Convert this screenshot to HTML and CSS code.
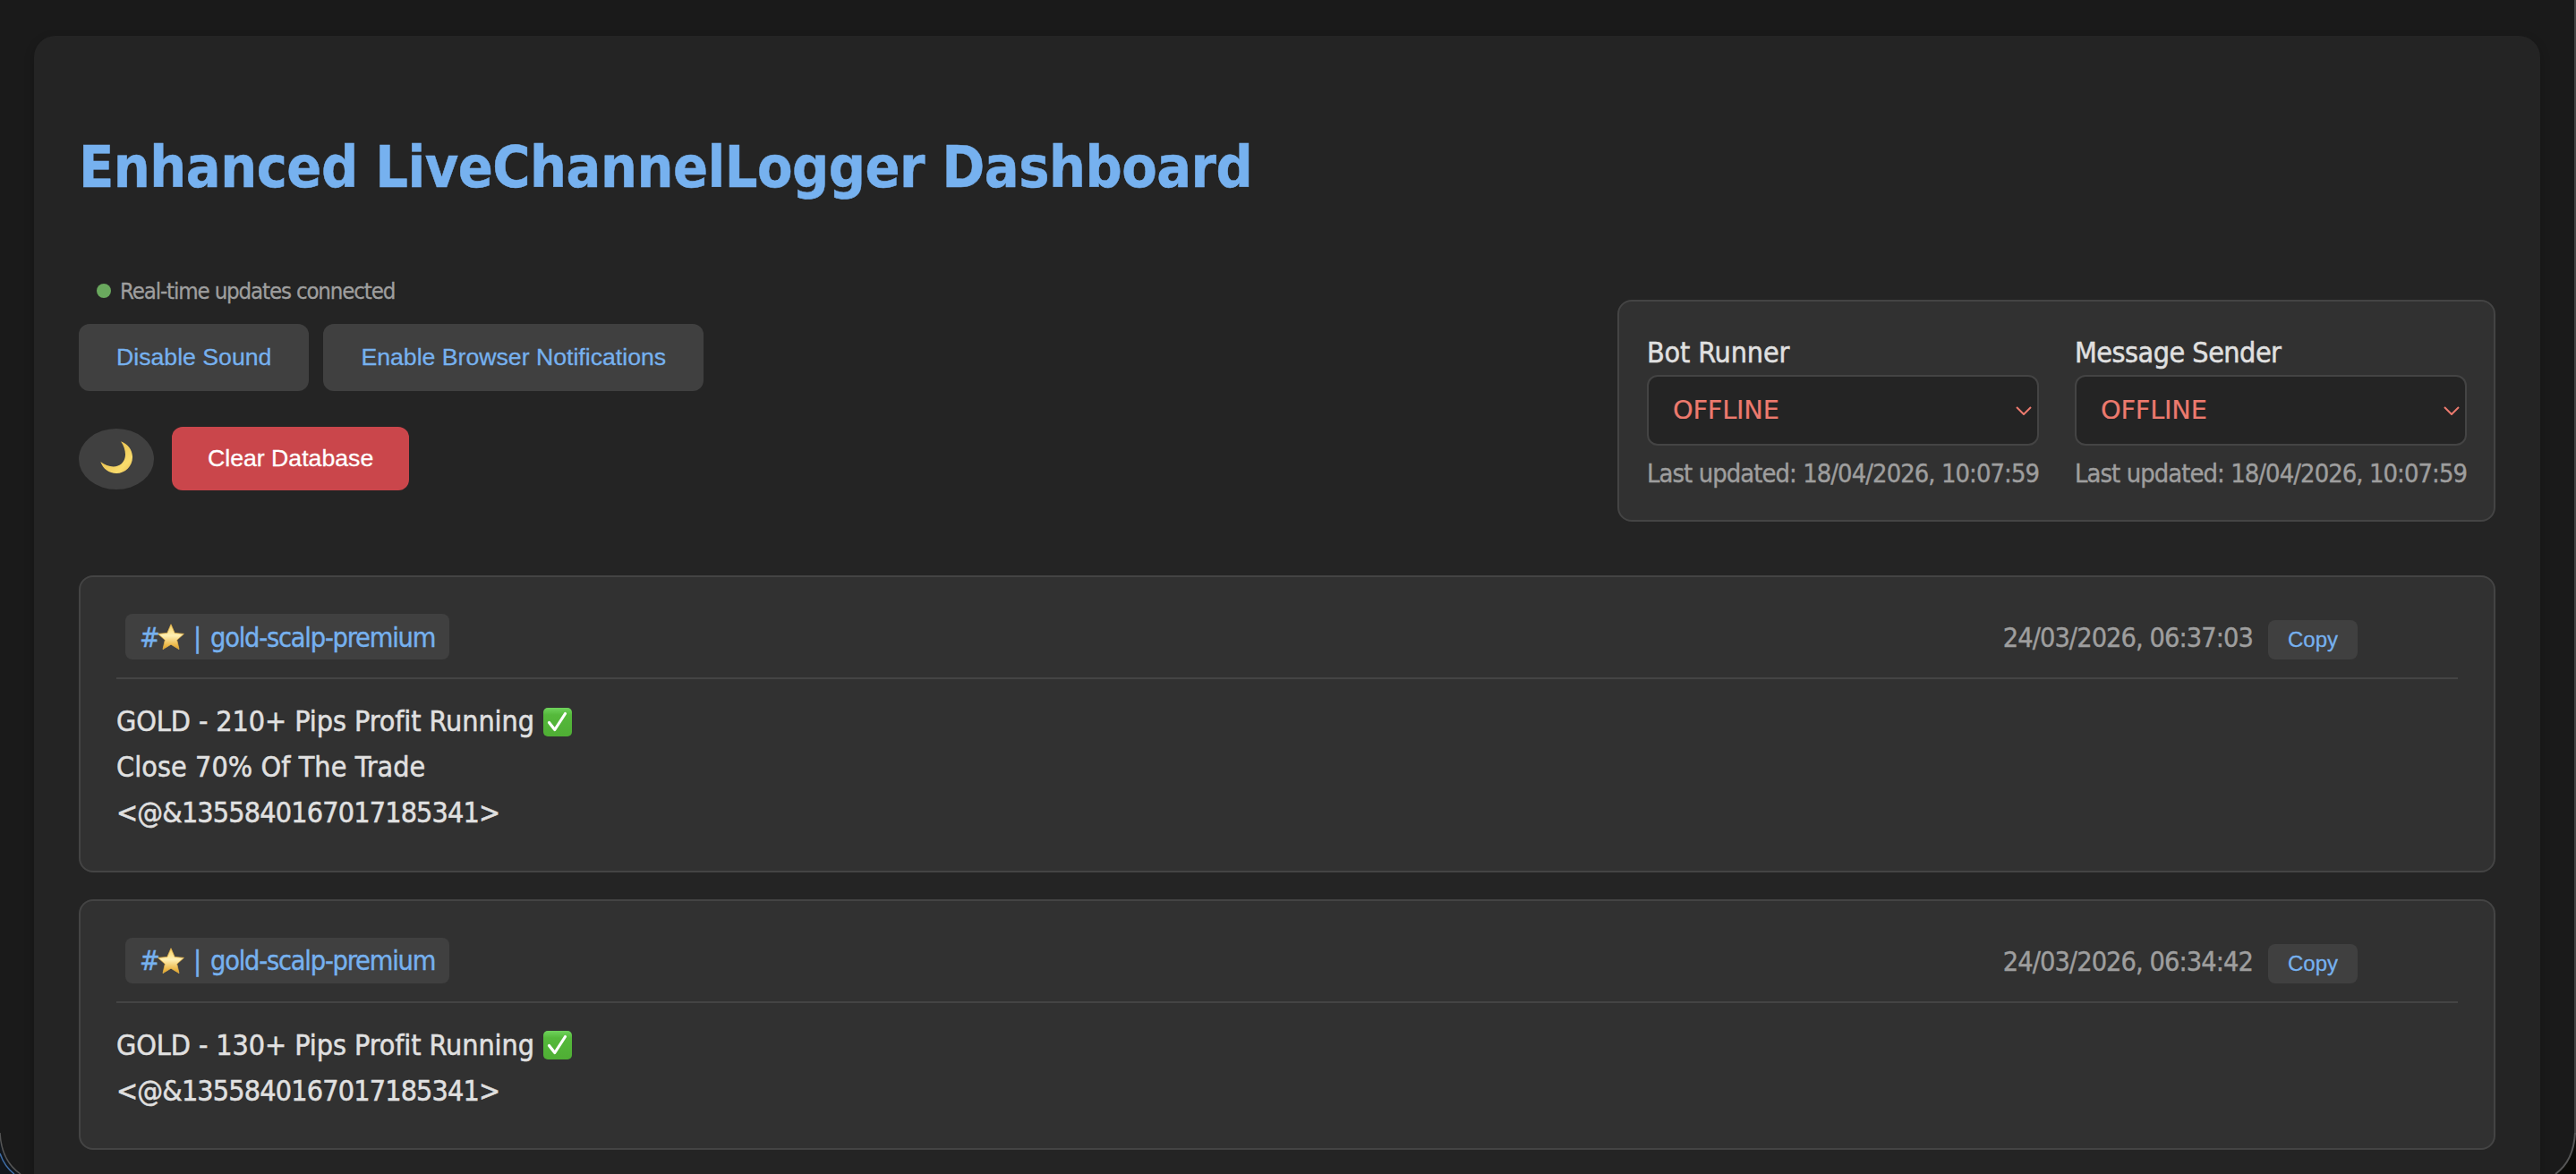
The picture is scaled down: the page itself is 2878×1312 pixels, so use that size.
FILE: index.html
```html
<!DOCTYPE html>
<html lang="en">
<head>
<meta charset="utf-8">
<title>Enhanced LiveChannelLogger Dashboard</title>
<link rel="stylesheet" href="styles.css">
</head>
<body>
<svg width="0" height="0" class="defs" aria-hidden="true">
  <defs>
    <linearGradient id="starFill" x1="0" y1="0" x2="0" y2="1"><stop offset="0" stop-color="#f6d060"/><stop offset=".45" stop-color="#fff0b4"/><stop offset="1" stop-color="#e3a01c"/></linearGradient>
    <linearGradient id="checkFill" x1="0" y1="0" x2="0" y2="1"><stop offset="0" stop-color="#6fd35c"/><stop offset=".25" stop-color="#55b93b"/><stop offset="1" stop-color="#4fae34"/></linearGradient>
    <linearGradient id="moonFill" x1="0" y1="0" x2="1" y2="1"><stop offset="0" stop-color="#e0b040"/><stop offset=".75" stop-color="#f9dc6c"/><stop offset="1" stop-color="#e6b850"/></linearGradient>
    <symbol id="star" viewBox="0 0 30 30"><path d="M15 .8 19.2 10.400 29.400 11.400 21.700 18.300 24 28.600 15 23.200 6 28.600 8.300 18.300 .6 11.400 10.800 10.400Z" fill="url(#starFill)" stroke="#e3b24a" stroke-width=".8" stroke-linejoin="round"/></symbol>
    <symbol id="check" viewBox="0 0 32 32"><rect width="32" height="32" rx="5" fill="url(#checkFill)"/><path d="M6.500 16.500 12.800 24.500 24.500 6.500" fill="none" stroke="#fff" stroke-width="3.2" stroke-linecap="round" stroke-linejoin="round"/></symbol>
  </defs>
</svg>
<main class="container">
  <h1 class="title">Enhanced LiveChannelLogger Dashboard</h1>
  <div class="top">
    <div class="controls">
      <div class="status"><i class="dot"></i><span>Real-time updates connected</span></div>
      <div class="row">
        <button class="btn">Disable Sound</button>
        <button class="btn">Enable Browser Notifications</button>
      </div>
      <div class="row second">
        <button class="moon" aria-label="Toggle theme"><svg width="36" height="36" viewBox="0 0 36 36"><path d="M23 .3C31 3 36 10 36 18 36 28 28 36 18 36 10 36 3 31 .3 23 8 29 18 30.500 24 25 30 19 29 9 23 .3Z" fill="url(#moonFill)"/></svg></button>
        <button class="btn danger">Clear Database</button>
      </div>
    </div>
    <section class="panel">
      <div class="runner">
        <div class="label">Bot Runner</div>
        <div class="select"><span>OFFLINE</span><svg width="18" height="10" viewBox="0 0 18 10"><path d="M1 1 9 9 17 1"/></svg></div>
        <div class="updated">Last updated: 18/04/2026, 10:07:59</div>
      </div>
      <div class="runner">
        <div class="label sender">Message Sender</div>
        <div class="select"><span>OFFLINE</span><svg width="18" height="10" viewBox="0 0 18 10"><path d="M1 1 9 9 17 1"/></svg></div>
        <div class="updated">Last updated: 18/04/2026, 10:07:59</div>
      </div>
    </section>
  </div>
  <div class="messages">
    <article class="card">
      <header class="head">
        <div class="tag"><span class="hash">#</span><svg class="star"><use href="#star"/></svg><span class="bar">|</span><span>gold-scalp-premium</span></div>
        <div class="meta"><span class="time">24/03/2026, 06:37:03</span><button class="copy">Copy</button></div>
      </header>
      <div class="body">
        <div class="line"><span>GOLD - 210+ Pips Profit Running</span><svg class="check"><use href="#check"/></svg></div>
        <div class="line close"><span>Close 70% Of The Trade</span></div>
        <div class="line mention"><span>&lt;@&amp;1355840167017185341&gt;</span></div>
      </div>
    </article>
    <article class="card">
      <header class="head">
        <div class="tag"><span class="hash">#</span><svg class="star"><use href="#star"/></svg><span class="bar">|</span><span>gold-scalp-premium</span></div>
        <div class="meta"><span class="time">24/03/2026, 06:34:42</span><button class="copy">Copy</button></div>
      </header>
      <div class="body">
        <div class="line"><span>GOLD - 130+ Pips Profit Running</span><svg class="check"><use href="#check"/></svg></div>
        <div class="line mention"><span>&lt;@&amp;1355840167017185341&gt;</span></div>
      </div>
    </article>
  </div>
</main>
<div class="window-edge"></div>
<svg class="corner left" width="24" height="46" viewBox="0 0 24 46"><path d="M0 0C1 19 8 36 23 46H0Z" fill="#11161c"/><path d="M0 0C1 19 8 36 23 46" fill="none" stroke="#555" stroke-width="1.500"/><path d="M0 23C3 32 8 40 16 46" fill="none" stroke="#3f6ea8" stroke-width="1.500"/></svg>
<svg class="corner right" width="24" height="46" viewBox="0 0 24 46"><path d="M24 0C23 19 16 36 1 46H24Z" fill="#0b0b08"/><path d="M23 0C22 19 15 36 1 46" fill="none" stroke="#555" stroke-width="2"/></svg>
</body>
</html>
```
FILE: styles.css
```css
* { box-sizing: border-box; }
html, body { height: 100%; }
body {
  margin: 0;
  padding: 40px 40px 0 38px;
  overflow: hidden;
  background: #1a1a1a;
  color: #e0e0e0;
  font: 32px/51px "DejaVu Sans Condensed", "DejaVu Sans", sans-serif;
}
.defs { position: absolute; }
span { white-space: nowrap; }
button { border: 0; font-family: "Liberation Sans", Arial, sans-serif; padding: 0; }
.container {
  height: 1272px;
  overflow: hidden;
  padding: 96px 50px 0;
  background: #242424;
  border-radius: 24px 24px 0 0;
  box-shadow: 0 4px 12px rgba(0, 0, 0, .2);
}
.title { margin: 0 0 67px; font-size: 64px; line-height: 102px; letter-spacing: -.49px; color: #76b1ef; -webkit-text-stroke: .5px; }
.top { display: flex; justify-content: space-between; align-items: flex-start; }
.status { display: flex; align-items: center; height: 40px; margin-bottom: 17px; padding-left: 20px; gap: 10px; font-size: 25.6px; line-height: 40px; letter-spacing: -1.15px; color: #9e9e9e; -webkit-text-stroke: .3px; }
.dot { width: 16px; height: 16px; border-radius: 50%; background: #6aa95e; }
.row { display: flex; align-items: center; gap: 16px; }
.second { margin-top: 40px; gap: 20px; }
.btn { height: 75px; padding: 0 42px; border-radius: 12px; background: #404040; color: #76b1ef; font-size: 26.67px; -webkit-text-stroke: .3px; }
.danger { height: 71px; padding: 0 40px; background: #ca464b; color: #fff; }
.moon { display: flex; align-items: center; justify-content: center; width: 84px; height: 68px; padding-bottom: 4px; border-radius: 50%; background: #404040; }
.panel { display: flex; gap: 40px; margin-top: 30px; height: 248px; padding: 32px 30px 0 31px; border: 2px solid #444; border-radius: 16px; background: #313131; }
.runner { width: 438px; white-space: nowrap; }
.label { line-height: 50px; letter-spacing: -.15px; -webkit-text-stroke: .5px; }
.sender { letter-spacing: -.5px; }
.select { display: flex; align-items: center; justify-content: space-between; height: 79px; padding: 0 6px 0 27px; border: 2px solid #444; border-radius: 12px; background: #242424; color: #ec7a6e; font-family: "DejaVu Sans", sans-serif; font-size: 28.8px; letter-spacing: -.2px; -webkit-text-stroke: .2px; }
.select svg { fill: none; stroke: #ec7a6e; stroke-width: 2; }
.updated { margin-top: 8px; font-size: 28.8px; line-height: 46px; letter-spacing: -.91px; color: #9e9e9e; -webkit-text-stroke: .4px; }
.messages { display: flex; flex-direction: column; gap: 30px; margin-top: 60px; }
.card { padding: 41px 40px 39px; border: 2px solid #444; border-radius: 16px; background: #313131; }
.head { display: flex; justify-content: space-between; align-items: flex-end; padding: 0 112px 20px 10px; border-bottom: 2px solid #444; }
.tag { display: flex; align-items: center; width: 362px; height: 51px; padding: 1px 0 0 16px; border-radius: 8px; background: #404040; color: #76b1ef; font-size: 30.4px; letter-spacing: -1.2px; -webkit-text-stroke: .4px; }
.hash { width: 20px; }
.star { width: 30px; height: 30px; margin-right: 10px; }
.bar { margin-right: 11px; }
.meta { display: flex; align-items: flex-end; gap: 17px; }
.time { position: relative; top: 1px; color: #9e9e9e; font-size: 30.4px; letter-spacing: -.92px; -webkit-text-stroke: .4px; }
.copy { width: 100px; height: 44px; border-radius: 8px; background: #404040; color: #76b1ef; font-size: 24px; -webkit-text-stroke: .3px; }
.body { padding-top: 22px; margin-bottom: -1px; }
.line { display: flex; align-items: center; gap: 10px; height: 51.2px; line-height: 51.2px; letter-spacing: -.07px; -webkit-text-stroke: .5px; }
.close { letter-spacing: .08px; }
.mention { letter-spacing: -.83px; }
.check { width: 32px; height: 32px; }
.window-edge { position: fixed; right: 0; top: 0; width: 2px; height: 1268px; background: #444; }
.corner { position: fixed; bottom: 0; }
.left { left: 0; }
.right { right: 0; }
```
